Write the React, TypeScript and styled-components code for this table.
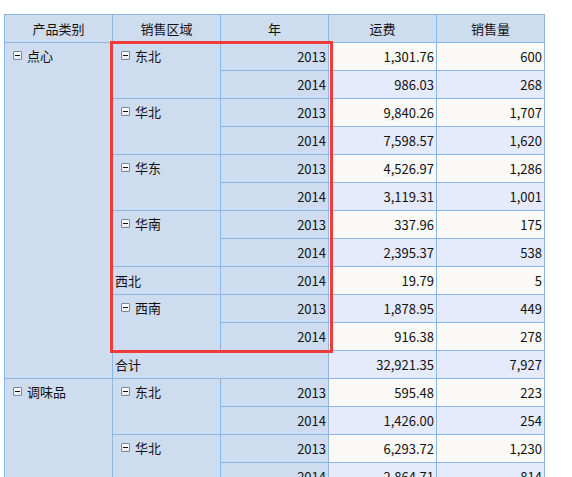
import React from "react";
import styled, { createGlobalStyle } from "styled-components";

const GlobalStyle = createGlobalStyle`
  html, body { margin: 0; padding: 0; background: #ffffff; }
  body { font-family: "Noto Sans CJK SC", "Microsoft YaHei", sans-serif; }
`;

const Wrap = styled.div`
  position: relative;
  margin: 14px 0 0 4px;
  width: 541px;
`;

const Table = styled.table`
  border-collapse: collapse;
  table-layout: fixed;
  width: 541px;
  font-size: 13px;
  color: #111;
  font-family: "Noto Sans CJK SC", "Microsoft YaHei", sans-serif;
`;

const HeadCell = styled.th`
  background: #cedcef;
  border: 1px solid #8db6e3;
  height: 27px;
  padding: 0;
  font-weight: normal;
  text-align: center;
  line-height: 27px;
`;

const DimCell = styled.td<{ $indent?: boolean }>`
  background: #cedcef;
  border: 1px solid #8db6e3;
  padding: 0 0 0 ${(p) => (p.$indent ? 8 : 2)}px;
  vertical-align: top;
  line-height: 27px;
  height: 27px;
  white-space: nowrap;
  overflow: hidden;
`;

const YearCell = styled.td`
  background: #cedcef;
  border: 1px solid #8db6e3;
  padding: 0 2px 0 0;
  text-align: right;
  height: 27px;
  line-height: 27px;
`;

const ValCell = styled.td<{ $alt: boolean }>`
  background: ${(p) => (p.$alt ? "#e5ebfd" : "#faf9f5")};
  border: 1px solid #8db6e3;
  padding: 0 2px 0 0;
  text-align: right;
  height: 27px;
  line-height: 27px;
`;

const Label = styled.div`
  display: flex;
  align-items: center;
  gap: 5px;
  height: 25px;
  line-height: 16px;
`;

const Minus = styled.span`
  display: block;
  flex: none;
  position: relative;
  width: 7px;
  height: 7px;
  border: 1px solid #7d8896;
  background: linear-gradient(#ffffff, #e6eaf0);
  border-radius: 1px;
  &::after {
    content: "";
    position: absolute;
    left: 1px;
    right: 1px;
    top: 3px;
    height: 1px;
    background: #111;
  }
`;

const Highlight = styled.div`
  position: absolute;
  left: 106px;
  top: 27px;
  width: 223px;
  height: 312px;
  box-sizing: border-box;
  border: 3px solid #f03b3b;
  pointer-events: none;
`;

type Row = {
  cat?: { name: string; span: number };
  region?: { name: string; span: number; tree: boolean };
  total?: boolean;
  year?: string;
  fee: string;
  qty: string;
};

const rows: Row[] = [
  { cat: { name: "点心", span: 12 }, region: { name: "东北", span: 2, tree: true }, year: "2013", fee: "1,301.76", qty: "600" },
  { year: "2014", fee: "986.03", qty: "268" },
  { region: { name: "华北", span: 2, tree: true }, year: "2013", fee: "9,840.26", qty: "1,707" },
  { year: "2014", fee: "7,598.57", qty: "1,620" },
  { region: { name: "华东", span: 2, tree: true }, year: "2013", fee: "4,526.97", qty: "1,286" },
  { year: "2014", fee: "3,119.31", qty: "1,001" },
  { region: { name: "华南", span: 2, tree: true }, year: "2013", fee: "337.96", qty: "175" },
  { year: "2014", fee: "2,395.37", qty: "538" },
  { region: { name: "西北", span: 1, tree: false }, year: "2014", fee: "19.79", qty: "5" },
  { region: { name: "西南", span: 2, tree: true }, year: "2013", fee: "1,878.95", qty: "449" },
  { year: "2014", fee: "916.38", qty: "278" },
  { total: true, fee: "32,921.35", qty: "7,927" },
  { cat: { name: "调味品", span: 4 }, region: { name: "东北", span: 2, tree: true }, year: "2013", fee: "595.48", qty: "223" },
  { year: "2014", fee: "1,426.00", qty: "254" },
  { region: { name: "华北", span: 2, tree: true }, year: "2013", fee: "6,293.72", qty: "1,230" },
  { year: "2014", fee: "2,864.71", qty: "814" },
];

const TreeLabel = ({ name }: { name: string }) => (
  <Label>
    <Minus />
    <span>{name}</span>
  </Label>
);

export default function App() {
  return (
    <>
      <GlobalStyle />
      <Wrap>
        <Table>
          <colgroup>
            <col style={{ width: 108 }} />
            <col style={{ width: 108 }} />
            <col style={{ width: 108 }} />
            <col style={{ width: 108 }} />
            <col style={{ width: 108 }} />
          </colgroup>
          <thead>
            <tr>
              <HeadCell>产品类别</HeadCell>
              <HeadCell>销售区域</HeadCell>
              <HeadCell>年</HeadCell>
              <HeadCell>运费</HeadCell>
              <HeadCell>销售量</HeadCell>
            </tr>
          </thead>
          <tbody>
            {rows.map((r, i) => (
              <tr key={i}>
                {r.cat && (
                  <DimCell rowSpan={r.cat.span} $indent>
                    <TreeLabel name={r.cat.name} />
                  </DimCell>
                )}
                {r.total && <DimCell colSpan={2}>合计</DimCell>}
                {r.region && (
                  <DimCell rowSpan={r.region.span} $indent={r.region.tree}>
                    {r.region.tree ? <TreeLabel name={r.region.name} /> : r.region.name}
                  </DimCell>
                )}
                {r.year && <YearCell>{r.year}</YearCell>}
                <ValCell $alt={i % 2 === 1}>{r.fee}</ValCell>
                <ValCell $alt={i % 2 === 1}>{r.qty}</ValCell>
              </tr>
            ))}
          </tbody>
        </Table>
        <Highlight />
      </Wrap>
    </>
  );
}
